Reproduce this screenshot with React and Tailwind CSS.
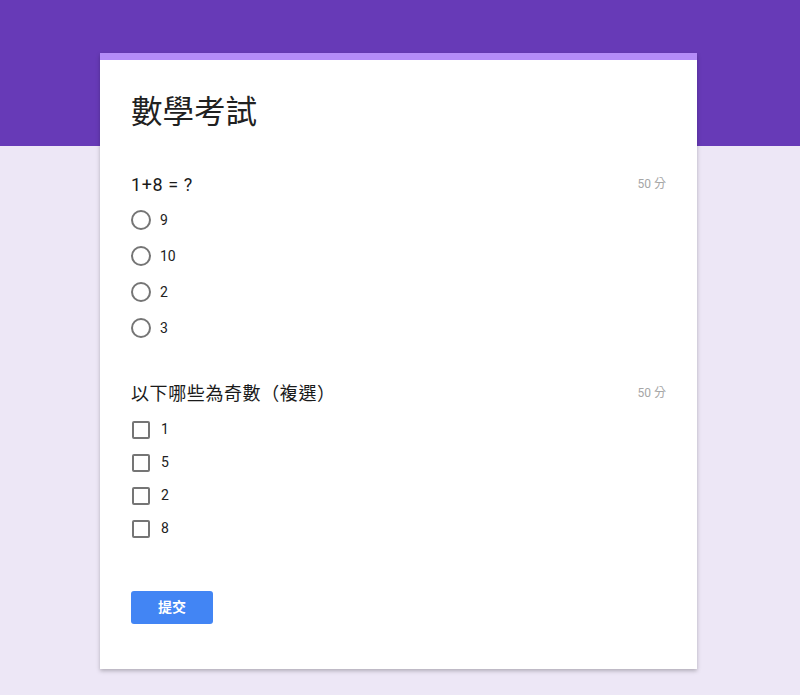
import React from "react";

const font = { fontFamily: '"Roboto", "Noto Sans CJK TC", sans-serif' };

const questions = [
  { title: "1+8 = ?", type: "radio", score: "50 分", options: ["9", "10", "2", "3"] },
  { title: "以下哪些為奇數（複選）", type: "checkbox", score: "50 分", options: ["1", "5", "2", "8"] },
];

function Radio() {
  return <span className="w-[20px] h-[20px] rounded-full border-2 border-[#757575] shrink-0" />;
}

function Checkbox() {
  return <span className="w-[18px] h-[18px] rounded-[2px] border-2 border-[#757575] shrink-0" />;
}

export default function App() {
  return (
    <div
      className="min-h-[695px] bg-[linear-gradient(to_bottom,#673ab7_146px,#ede7f6_146px)] pt-[53px] pb-[26px]"
      style={font}
    >
      <div className="ml-[100px] w-[597px] bg-white shadow-[0_2px_4px_rgba(0,0,0,0.25)]">
        <div className="h-[7px] bg-[#b48bf8]" />
        <div className="px-[31px] pt-[33px] pb-[45px]">
          <h1 className="text-[31.5px] leading-[40px] text-[#212121]">數學考試</h1>

          {/* Questions */}
          {questions.map((q, qi) => (
            <div key={qi} className={qi === 0 ? "mt-[39px]" : "mt-[35px]"}>
              <div className="flex items-center justify-between h-[24px]">
                <span className="text-[18px] font-normal tracking-[0.6px] text-[#1a1a1a]">{q.title}</span>
                <span className="text-[12px] text-[#a6a6a6]">{q.score}</span>
              </div>
              <div className={q.type === "radio" ? "mt-[6px]" : "mt-[8px]"}>
                {q.options.map((o, i) =>
                  q.type === "radio" ? (
                    <div key={i} className="flex items-center h-[36px] gap-[9px]">
                      <Radio />
                      <span className="text-[14px] text-[#212121]">{o}</span>
                    </div>
                  ) : (
                    <div key={i} className="flex items-center h-[33px] gap-[11px] pl-[1px]">
                      <Checkbox />
                      <span className="text-[14px] text-[#212121]">{o}</span>
                    </div>
                  )
                )}
              </div>
            </div>
          ))}

          <button className="mt-[46px] w-[82px] h-[33px] rounded-[3px] bg-[#4285f4] text-white text-[14px] font-bold">
            提交
          </button>
        </div>
      </div>
    </div>
  );
}
